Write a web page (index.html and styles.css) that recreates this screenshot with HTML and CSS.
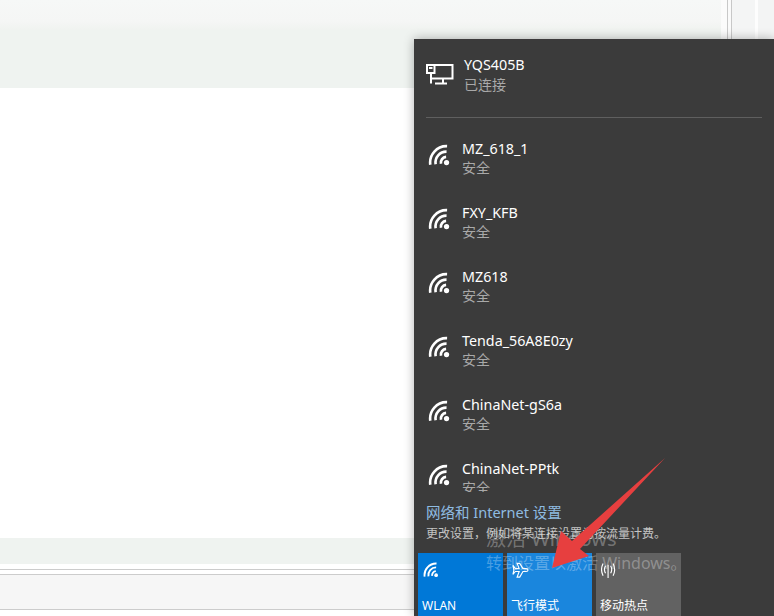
FILE: index.html
```html
<!DOCTYPE html>
<html>

<head>
	<meta charset="utf-8">
	<title>网络</title>
	<link rel="stylesheet" href="styles.css">
</head>
<body>
	<svg class="defs" width="0" height="0">
		<symbol id="wifi" viewBox="0 0 22 22">
			<path class="arc-outer" d="M2.1 19 A15 15 0 0 1 17.5 2"/>
			<path d="M7 18.5 A10 10 0 0 1 17 7"/>
			<path d="M11.9 18 A5.2 5.2 0 0 1 16.6 11.8"/>
			<circle class="dot" cx="17" cy="17" r="2.4"/>
		</symbol>
	</svg>

	<div class="app-top"></div>
	<div class="app-band"></div>
	<div class="app-content"></div>
	<div class="app-band app-band-low"></div>
	<div class="app-rule"></div>
	<div class="app-status"></div>
	<div class="scroll-edge"></div>

	<div class="flyout">
		<div class="current">
			<svg class="pc-icon" width="28" height="22" viewBox="0 0 28 22">
				<path d="M8.5 2 H26.5 V15.5 H5"/>
				<path d="M5 10 V20.5"/>
				<path d="M17 15.5 V20.5"/>
				<path d="M9 20.5 H21"/>
				<rect x="1" y="2" width="7.5" height="8"/>
				<path d="M3 5 H6.5"/>
			</svg>
			<div>
				<div class="net-name">YQS405B</div>
				<div class="net-sub">已连接</div>
			</div>
		</div>
		<div class="divider"></div>
		<div class="net-list">
			<div class="net-row">
				<svg class="wifi-icon"><use href="#wifi"/></svg>
				<div><div class="net-name">MZ_618_1</div><div class="net-sub">安全</div></div>
			</div>
			<div class="net-row">
				<svg class="wifi-icon"><use href="#wifi"/></svg>
				<div><div class="net-name">FXY_KFB</div><div class="net-sub">安全</div></div>
			</div>
			<div class="net-row">
				<svg class="wifi-icon"><use href="#wifi"/></svg>
				<div><div class="net-name">MZ618</div><div class="net-sub">安全</div></div>
			</div>
			<div class="net-row">
				<svg class="wifi-icon"><use href="#wifi"/></svg>
				<div><div class="net-name">Tenda_56A8E0zy</div><div class="net-sub">安全</div></div>
			</div>
			<div class="net-row weak">
				<svg class="wifi-icon"><use href="#wifi"/></svg>
				<div><div class="net-name">ChinaNet-gS6a</div><div class="net-sub">安全</div></div>
			</div>
			<div class="net-row weak">
				<svg class="wifi-icon"><use href="#wifi"/></svg>
				<div><div class="net-name">ChinaNet-PPtk</div><div class="net-sub">安全</div></div>
			</div>
		</div>
		<div class="settings">
			<div class="settings-link">网络和 Internet 设置</div>
			<div class="settings-note">更改设置，例如将某连接设置为按流量计费。</div>
		</div>
		<div class="tiles">
			<div class="tile tile-on">
				<svg class="tile-icon"><use href="#wifi"/></svg>
				<div class="tile-label">WLAN</div>
			</div>
			<div class="tile tile-light">
				<svg class="tile-icon" viewBox="0 0 18 18">
					<path class="thin" d="M1 3.5 L3.6 7 H7.6 L5.4 1.5 H8.2 L11.6 7 H15 C17.6 7 17.6 10 15 10 H11.6 L8.2 16 H5.4 L7.6 10 H3.6 L1 13 L2 8.5 Z"/>
				</svg>
				<div class="tile-label">飞行模式</div>
			</div>
			<div class="tile tile-off">
				<svg class="tile-icon" viewBox="0 0 18 18">
					<path class="thin" d="M7.5 3 V17"/>
					<path class="thin" d="M4.8 4 C3.4 6.5 3.4 9.5 4.8 12"/>
					<path class="thin" d="M10.2 4 C11.6 6.5 11.6 9.5 10.2 12"/>
					<path class="thin" d="M2.2 1.5 C0.2 5.5 0.2 10.5 2.2 14.5"/>
					<path class="thin" d="M12.8 1.5 C14.8 5.5 14.8 10.5 12.8 14.5"/>
				</svg>
				<div class="tile-label">移动热点</div>
			</div>
		</div>
	</div>

	<div class="watermark">
		<div class="wm-title">激活 Windows</div>
		<div class="wm-note">转到设置以激活 Windows。</div>
	</div>

	<svg class="arrow" width="774" height="616" viewBox="0 0 774 616">
		<polygon points="552,568 561,531 572,541 665,458 580,549 589,556"/>
	</svg>
</body>

</html>
```

FILE: styles.css
```css
html, body { margin: 0; height: 100%; }
body {
	position: relative;
	overflow: hidden;
	background: #fff;
	font-family: "Noto Sans", "Noto Sans CJK SC", sans-serif;
}
.defs { position: absolute; }

/* app behind the flyout */
.app-top { height: 30px; background: linear-gradient(#f6f8f7, #f5f6f5 70%, #f0f3f0); }
.app-band { height: 58px; background: #eff3f0; }
.app-content { height: 450px; background: #fff; }
.app-band-low { height: 26px; }
.app-rule { height: 4px; margin-top: 5px; border-top: 1px solid #ccc; background: #fff; }
.app-status { height: 34px; border-top: 1px solid #ccc; border-bottom: 1px solid #ccc; background: #f6f6f6; }
.scroll-edge {
	position: absolute;
	top: 0;
	right: 0;
	width: 53px;
	height: 39px;
	background: linear-gradient(90deg, #fbfbfb 0, #fbfbfb 6px, #c8c8c8 6px, #c8c8c8 7px, #fafafa 7px, #fafafa 10px, #c8c8c8 10px, #c8c8c8 11px, #f4f5f5 11px, #f4f5f5 34px, #fdfdfd 34px, #fdfdfd 37px, #f3f4f4 37px);
}

/* network flyout */
.flyout {
	position: absolute;
	left: 414px;
	top: 39px;
	width: 360px;
	height: 577px;
	display: flex;
	flex-direction: column;
	background: #3b3b3b;
	box-shadow: 0 0 10px rgba(0, 0, 0, 0.3);
	overflow: hidden;
}
.current {
	display: flex;
	align-items: center;
	height: 70px;
	padding: 2px 0 0 12px;
	box-sizing: border-box;
	gap: 10px;
	flex: none;
}
.pc-icon { margin-top: -2px; }
.pc-icon path, .pc-icon rect { fill: none; stroke: #fff; stroke-width: 2; }
.divider { height: 1px; margin: 8px 12px 0; background: #5f5f5f; flex: none; }
.net-list { height: 374px; flex: none; overflow: hidden; box-sizing: border-box; padding-top: 8px; }
.net-row {
	display: flex;
	align-items: center;
	height: 64px;
	padding-left: 14px;
	gap: 10px;
}
.net-name { color: #fff; font-size: 14.3px; line-height: 20px; }
.net-sub { color: #a9a9a9; font-size: 14px; line-height: 20px; }
.net-row .net-sub { line-height: 18px; }
.wifi-icon { width: 24px; height: 24px; margin-top: -4px; }

symbol path, .wifi-icon path, .tile-icon path { fill: none; stroke: currentColor; }
symbol path { stroke-width: 2.4; }
.wifi-icon, .tile-icon { color: #fff; }
.dot { fill: currentColor; }
.weak .arc-outer { stroke: #707070; }

.settings { flex: none; padding: 9px 0 0 12px; height: 55px; box-sizing: border-box; }
.settings-link { color: #8fbce2; font-size: 14.5px; line-height: 22px; }
.settings-note { color: #c4c4c4; font-size: 12px; line-height: 18px; margin-top: 2px; }
.tiles { display: flex; gap: 4px; padding-left: 4px; margin-top: 6px; flex: none; }
.tile {
	position: relative;
	width: 85px;
	height: 63px;
	padding: 9px 0 0 4px;
	box-sizing: border-box;
	color: #fff;
}
.tile-on { background: #0078d7; }
.tile-light { background: #1a86dd; }
.tile-off { background: #626262; }
.tile-icon { display: block; width: 17px; height: 17px; margin-left: 1px; }
.tile .thin { stroke-width: 1.2; }
.tile-label { font-size: 12px; line-height: 18px; margin-top: 18px; }

/* overlays */
.watermark { position: absolute; left: 486px; top: 525px; color: rgba(255, 255, 255, 0.3); pointer-events: none; }
.wm-title { font-size: 20px; line-height: 28px; }
.wm-note { font-size: 16px; line-height: 20px; }
.arrow { position: absolute; left: 0; top: 0; }
.arrow polygon { fill: #e73f3f; }
```
